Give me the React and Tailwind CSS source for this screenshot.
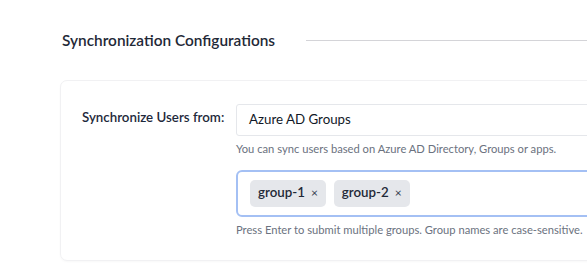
const Tag = ({ label }) => (
  <span className="flex h-[27px] items-center gap-[6px] rounded-[5px] bg-[#e5e7eb] pl-[8px] pr-[8px] text-[13.3px] font-semibold text-[#1f2937]">
    {label}
    <span className="text-[12px] font-normal text-[#374151]">×</span>
  </span>
);

export default function App() {
  return (
    <div className="h-[272px] w-[587px] overflow-hidden bg-white font-['Lato',sans-serif]">
      <div className="flex items-center pl-[62px] pt-[29px]">
        <h2 className="text-[15.4px] font-semibold text-[#1f2937]">
          Synchronization Configurations
        </h2>
        <div className="ml-[31px] h-px flex-1 bg-[#d4d4d8]" />
      </div>

      <div className="ml-[60px] mt-[28px] h-[181px] w-[600px] rounded-[7px] border border-[#f1f1f3] shadow-[0_1px_2px_rgba(0,0,0,0.03)]">
        <div className="flex pl-[21px] pt-[23px]">
          <label className="w-[154px] pt-[4px] text-[13.3px] font-semibold text-[#1e293b]">
            Synchronize Users from:
          </label>
          <div className="flex flex-col">
            <div className="flex h-[32px] w-[420px] items-center rounded-[3px] border border-[#e5e7eb] pl-[12px] text-[13.3px] text-[#111827]">
              Azure AD Groups
            </div>
            <p className="mt-[5px] text-[11.2px] text-[#6b7280]">
              You can sync users based on Azure AD Directory, Groups or apps.
            </p>
            <div className="mt-[12px] flex h-[47px] w-[420px] items-center gap-[8px] rounded-[6px] border-2 border-[#a4c0f4] pl-[12px]">
              <Tag label="group-1" />
              <Tag label="group-2" />
            </div>
            <p className="mt-[5px] text-[11.2px] text-[#6b7280]">
              Press Enter to submit multiple groups. Group names are case-sensitive.
            </p>
          </div>
        </div>
      </div>
    </div>
  );
}
